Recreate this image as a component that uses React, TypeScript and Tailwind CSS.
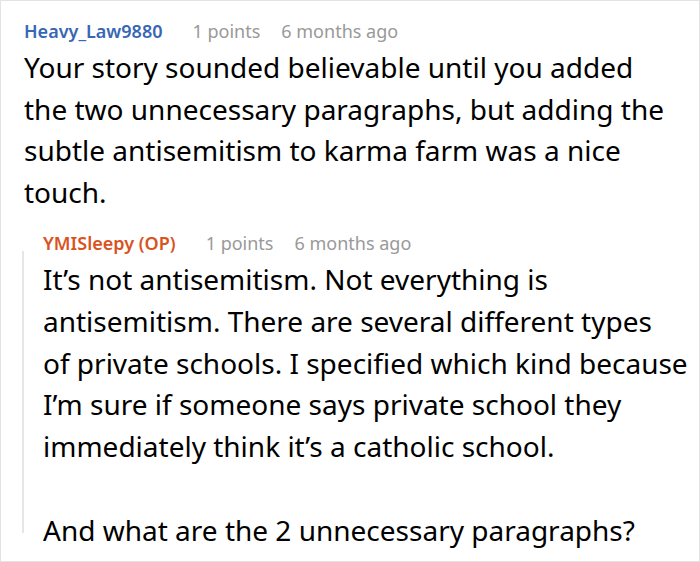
const comment = {
  author: 'Heavy_Law9880',
  points: '1 points',
  age: '6 months ago',
  lines: [
    'Your story sounded believable until you added',
    'the two unnecessary paragraphs, but adding the',
    'subtle antisemitism to karma farm was a nice',
    'touch.',
  ],
};

const reply = {
  author: 'YMISleepy (OP)',
  points: '1 points',
  age: '6 months ago',
  lines: [
    'It’s not antisemitism. Not everything is',
    'antisemitism. There are several different types',
    'of private schools. I specified which kind because',
    'I’m sure if someone says private school they',
    'immediately think it’s a catholic school.',
  ],
  last: 'And what are the 2 unnecessary paragraphs?',
};

function Meta({ author, points, age, color }: { author: string; points: string; age: string; color: string }) {
  return (
    <div className="flex items-baseline text-[18px] leading-[24px]">
      <span className={`font-semibold ${color}`}>{author}</span>
      <span className="ml-[30px] text-[#999999]">{points}</span>
      <span className="ml-[21px] text-[#999999]">{age}</span>
    </div>
  );
}

function Lines({ lines }: { lines: string[] }) {
  return (
    <p>
      {lines.map((l, i) => (
        <span key={i} className="block whitespace-nowrap">
          {l}
        </span>
      ))}
    </p>
  );
}

export default function App() {
  return (
    <div
      className="w-[700px] h-[562px] bg-white border border-[#e3e3e3] overflow-hidden text-black"
      style={{ fontFamily: '"Noto Sans", "Open Sans", sans-serif' }}
    >
      <div className="pl-[23px] pr-[6px] pt-[18px]">
        <Meta author={comment.author} points={comment.points} age={comment.age} color="text-[#3866b6]" />
        <div className="mt-[4px] text-[28px] leading-[41.6px]">
          <Lines lines={comment.lines} />
        </div>

        <div className="mt-[18px] -ml-[2px] flex">
          <div className="w-[2px] bg-[#e6e6e6] mt-[20px] mb-[18px]" />
          <div className="pl-[19px]">
            <Meta author={reply.author} points={reply.points} age={reply.age} color="text-[#d9531e]" />
            <div className="mt-[4px] text-[28px] leading-[41.7px]">
              <Lines lines={reply.lines} />
              <p className="mt-[41.7px]">{reply.last}</p>
            </div>
          </div>
        </div>
      </div>
    </div>
  );
}
